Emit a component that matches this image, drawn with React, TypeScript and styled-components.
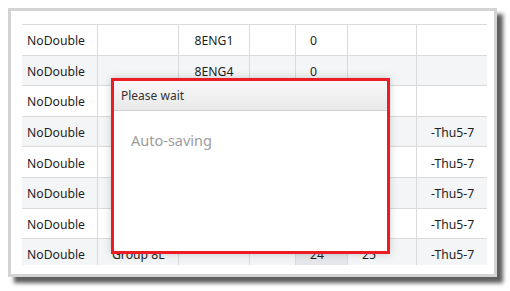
import styled, { createGlobalStyle } from "styled-components";

type RowData = string[];

const GlobalStyle = createGlobalStyle`
  html, body {
    margin: 0;
    padding: 0;
    background: #ffffff;
  }
  body {
    font-family: "Noto Sans", "Open Sans", sans-serif;
  }
`

const Page = styled.div`
  padding: 8px;
  width: 510px;
  height: 291px;
  box-sizing: border-box;
`

const Panel = styled.div`
  position: relative;
  width: 489px;
  height: 269px;
  box-sizing: border-box;
  border: 3px solid #d3d3d3;
  background: #ffffff;
  box-shadow: 6px 6px 4px rgba(40, 40, 40, 0.75);
  padding: 13px 0 0 11px;
`

const TableClip = styled.div`
  width: 465px;
  height: 241px;
  overflow: hidden;
`

const Row = styled.div<{ $striped: boolean }>`
  display: grid;
  grid-template-columns: 75px 81px 71px 46px 52px 69px 71px;
  height: 30.6px;
  box-sizing: border-box;
  border-top: 1px solid #dadada;
  background: ${(p) => (p.$striped ? "#f4f5f7" : "#ffffff")};
`

const Cell = styled.div<{ $first?: boolean; $center?: boolean; $hot?: boolean }>`
  display: flex;
  align-items: center;
  justify-content: ${(p) => (p.$center ? "center" : "flex-start")};
  padding-left: ${(p) => (p.$first ? "5px" : p.$center ? "0" : "14px")};
  padding-top: 2px;
  border-left: ${(p) => (p.$first ? "none" : "1px solid #dadada")};
  background: ${(p) => (p.$hot ? "#e6e7eb" : "transparent")};
  font-size: 12.2px;
  color: #1e1e1e;
  white-space: nowrap;
  overflow: hidden;
`

const Dialog = styled.div`
  position: absolute;
  left: 100px;
  top: 67px;
  width: 279px;
  height: 176px;
  box-sizing: border-box;
  border: 3px solid #ec1c24;
  background: #ffffff;
  box-shadow: 0 0 8px rgba(0, 0, 0, 0.18);
  display: flex;
  flex-direction: column;
`

const DialogHeader = styled.div`
  height: 30px;
  box-sizing: border-box;
  border-bottom: 1px solid #d2d2d2;
  background: linear-gradient(#f8f8f8, #e9e9ea);
  padding: 0 0 0 7px;
  display: flex;
  align-items: center;
  font-size: 12px;
  color: #333333;
`

const DialogBody = styled.div`
  padding: 19px 0 0 17px;
  font-size: 14.5px;
  color: #9c9c9c;
`

const rows: RowData[] = [
  ["NoDouble", "", "8ENG1", "", "0", "", ""],
  ["NoDouble", "", "8ENG4", "", "0", "", ""],
  ["NoDouble", "", "", "", "", "", ""],
  ["NoDouble", "", "", "", "", "", "-Thu5-7"],
  ["NoDouble", "", "", "", "", "", "-Thu5-7"],
  ["NoDouble", "", "", "", "", "", "-Thu5-7"],
  ["NoDouble", "", "", "", "", "", "-Thu5-7"],
  ["NoDouble", "Group 8L", "", "", "24", "25", "-Thu5-7"],
]

export default function App() {
  return (
    <>
      <GlobalStyle />
      <Page>
        <Panel>
          <TableClip>
            {rows.map((r, i) => (
              <Row key={i} $striped={i % 2 === 1}>
                {r.map((v, j) => (
                  <Cell
                    key={j}
                    $first={j === 0}
                    $center={j === 2}
                    $hot={i === 7 && j === 4}
                  >
                    {v}
                  </Cell>
                ))}
              </Row>
            ))}
          </TableClip>
          <Dialog>
            <DialogHeader>Please wait</DialogHeader>
            <DialogBody>Auto-saving</DialogBody>
          </Dialog>
        </Panel>
      </Page>
    </>
  )
}
